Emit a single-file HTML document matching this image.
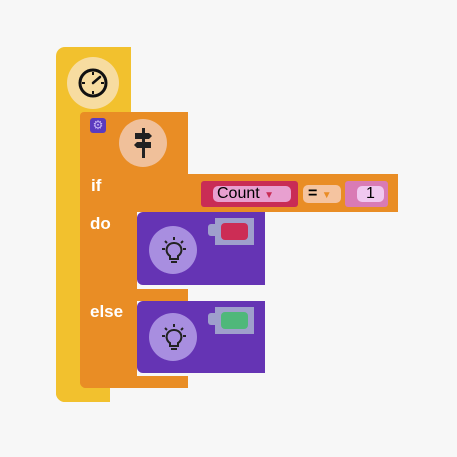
<!DOCTYPE html><html><head><style>
body{margin:0;width:457px;height:457px;background:#f7f7f7;position:relative;overflow:hidden;font-family:"Liberation Sans",sans-serif}
div{position:absolute;box-sizing:border-box}
.t{color:#fff;font-size:17px;font-weight:bold}
</style></head><body>
<!-- yellow -->
<div style="left:56px;top:47px;width:75px;height:70px;background:#f2c12e;border-radius:9px 0 0 0"></div>
<div style="left:56px;top:110px;width:26px;height:292px;background:#f2c12e;border-radius:0 0 0 9px"></div>
<div style="left:56px;top:385px;width:54px;height:17px;background:#f2c12e;border-radius:0 0 0 9px"></div>
<div style="left:67px;top:57px;width:52px;height:52px;border-radius:50%;background:#f7dca0"></div>
<svg style="position:absolute;left:77px;top:67px" width="32" height="32" viewBox="0 0 32 32"><circle cx="16" cy="16" r="13" fill="none" stroke="#111" stroke-width="3"/><path d="M16 16 L23 10" stroke="#111" stroke-width="2.5" stroke-linecap="round"/><g stroke="#111" stroke-width="2"><path d="M16 5v3M16 24v3M5 16h3M24 16h3"/></g></svg>
<!-- orange -->
<div style="left:80px;top:112px;width:108px;height:62px;background:#e98d25;border-radius:4px 0 0 0"></div>
<div style="left:80px;top:174px;width:318px;height:38px;background:#e98d25"></div>
<div style="left:80px;top:212px;width:57px;height:176px;background:#e98d25;border-radius:0 0 0 6px"></div>
<div style="left:80px;top:289px;width:108px;height:12px;background:#e98d25"></div>
<div style="left:80px;top:376px;width:108px;height:12px;background:#e98d25;border-radius:0 0 0 6px"></div>
<div style="left:90px;top:118px;width:16px;height:15px;background:#5b3bbf;border-radius:3px;color:#c9b8f5;font-size:12px;text-align:center;line-height:15px">⚙</div>
<div style="left:119px;top:119px;width:48px;height:48px;border-radius:50%;background:#f0c09a"></div>
<svg style="position:absolute;left:131px;top:128px" width="24" height="32" viewBox="0 0 24 32"><rect x="11" y="0" width="3" height="30" fill="#222"/><path d="M4 5h14l3 3-3 3H4z" fill="#222"/><path d="M20 14H6l-3 3 3 3h14z" fill="#222"/></svg>
<div class="t" style="left:91px;top:176px">if</div>
<div class="t" style="left:90px;top:214px">do</div>
<div class="t" style="left:90px;top:302px">else</div>
<!-- count -->
<div style="left:201px;top:181px;width:97px;height:26px;background:#c92c55;border-radius:3px"></div>
<div style="left:213px;top:186px;width:78px;height:16px;background:#e8a0d0;border-radius:5px;font-size:16px;line-height:16px;padding-left:4px;color:#000">Count <span style="color:#c92c55;font-size:10px">▼</span></div>
<div style="left:303px;top:185px;width:38px;height:18px;background:#f5c4a0;border-radius:5px;font-size:16px;line-height:18px;padding-left:5px;color:#000;font-weight:bold">= <span style="color:#e98d25;font-size:10px">▼</span></div>
<div style="left:345px;top:181px;width:43px;height:26px;background:#d97bb5;border-radius:3px"></div>
<div style="left:357px;top:186px;width:27px;height:16px;background:#f0c8f0;border-radius:5px;font-size:16px;line-height:16px;text-align:center;color:#000">1</div>
<!-- purple -->
<div style="left:137px;top:212px;width:128px;height:73px;background:#6534b4;border-radius:6px 0 0 6px"></div>
<div style="left:137px;top:301px;width:128px;height:72px;background:#6534b4;border-radius:6px 0 0 6px"></div>
<div style="left:149px;top:226px;width:48px;height:48px;border-radius:50%;background:#a88ee0"></div>
<div style="left:149px;top:313px;width:48px;height:48px;border-radius:50%;background:#a88ee0"></div>
<svg style="position:absolute;left:160px;top:236px" width="28" height="30" viewBox="0 0 28 30"><path d="M14 7a7 7 0 0 0-4 13v3h8v-3a7 7 0 0 0-4-13z" fill="none" stroke="#222" stroke-width="2"/><path d="M11 26h6M14 1v3M5 5l2 2M23 5l-2 2M2 13h3M23 13h3" stroke="#222" stroke-width="2"/></svg>
<svg style="position:absolute;left:160px;top:323px" width="28" height="30" viewBox="0 0 28 30"><path d="M14 7a7 7 0 0 0-4 13v3h8v-3a7 7 0 0 0-4-13z" fill="none" stroke="#222" stroke-width="2"/><path d="M11 26h6M14 1v3M5 5l2 2M23 5l-2 2M2 13h3M23 13h3" stroke="#222" stroke-width="2"/></svg>
<div style="left:208px;top:224px;width:10px;height:12px;background:#9f9fcc;border-radius:3px"></div>
<div style="left:215px;top:218px;width:39px;height:27px;background:#9f9fcc"></div>
<div style="left:221px;top:223px;width:27px;height:17px;background:#cc2d55;border-radius:4px"></div>
<div style="left:208px;top:313px;width:10px;height:12px;background:#9f9fcc;border-radius:3px"></div>
<div style="left:215px;top:307px;width:39px;height:27px;background:#9f9fcc"></div>
<div style="left:221px;top:312px;width:27px;height:17px;background:#4fb87a;border-radius:4px"></div>
</body></html>
